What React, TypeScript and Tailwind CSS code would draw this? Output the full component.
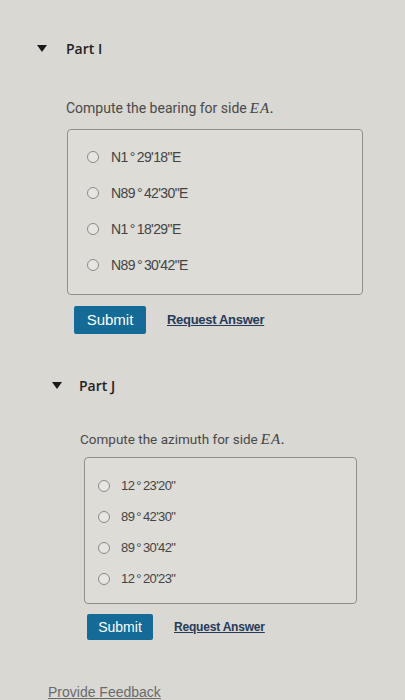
import React from "react";

const sans = { fontFamily: '"Liberation Sans", Arial, sans-serif' };

function Tri() {
  return (
    <svg width="10" height="7" viewBox="0 0 10 7">
      <path d="M0 0 L10 0 L5 7 Z" fill="#1a1a1a" />
    </svg>
  );
}

function Radio() {
  return <span className="inline-block w-[12px] h-[12px] rounded-full border-[1.5px] border-[#8a8a87] bg-[#e6e5e1] shrink-0" />;
}

function EA() {
  return (
    <span className="font-['Liberation_Serif',serif] italic text-[15px] text-[#444] ml-[3px] tracking-[1px]">
      EA.
    </span>
  );
}

function Angle({ text }: { text: string }) {
  const [a, b] = text.split("°");
  return (
    <>
      {a}
      <span className="mx-[2px]">°</span>
      {b}
    </>
  );
}

export default function App() {
  const opts1 = ["N1°29'18\"E", "N89°42'30\"E", "N1°18'29\"E", "N89°30'42\"E"];
  const opts2 = ["12°23'20\"", "89°42'30\"", "89°30'42\"", "12°20'23\""];
  return (
    <div className="w-[405px] h-[700px] overflow-hidden bg-[#d9d8d3] font-['Roboto',sans-serif]">
      {/* Part I */}
      <div className="flex flex-col pl-[37px]">
        <div className="flex items-center h-[20px] mt-[38px]">
          <Tri />
          <span className="ml-[19px] text-[14px] font-semibold text-[#222]" style={{ fontFamily: '"Open Sans", sans-serif' }}>Part I</span>
        </div>
        <div className="ml-[29px] mt-[40px] h-[20px] leading-[20px] text-[14px] text-[#4a4a4a]">
          Compute the bearing for side<EA />
        </div>
        <div className="ml-[30px] mt-[11px] w-[296px] h-[166px] border border-[#8f8e8a] rounded-[4px] bg-[#dddcd7] pt-[9px] pl-[19px]">
          {opts1.map((o) => (
            <div key={o} className="flex items-center h-[36px]">
              <Radio />
              <span className="ml-[12px] text-[14px] text-[#444] tracking-[-0.6px]" style={sans}><Angle text={o} /></span>
            </div>
          ))}
        </div>
        <div className="flex items-center ml-[37px] mt-[11px]">
          <div className="w-[72px] h-[28px] bg-[#146b97] rounded-[2px] flex items-center justify-center text-white text-[15px]" style={sans}>
            Submit
          </div>
          <span className="ml-[21px] text-[13px] font-bold underline text-[#243b59] tracking-[-0.3px]" style={sans}>Request Answer</span>
        </div>
      </div>

      {/* Part J */}
      <div className="flex flex-col pl-[52px]">
        <div className="flex items-center h-[20px] mt-[41px]">
          <Tri />
          <span className="ml-[17px] text-[14px] font-semibold text-[#222]" style={{ fontFamily: '"Open Sans", sans-serif' }}>Part J</span>
        </div>
        <div className="ml-[28px] mt-[34px] h-[20px] leading-[20px] text-[13.5px] text-[#4a4a4a]">
          Compute the azimuth for side<EA />
        </div>
        <div className="ml-[32px] mt-[8px] w-[273px] h-[147px] border border-[#8f8e8a] rounded-[4px] bg-[#dddcd7] pt-[12px] pl-[13px]">
          {opts2.map((o) => (
            <div key={o} className="flex items-center h-[31px]">
              <Radio />
              <span className="ml-[11px] text-[13px] text-[#444] tracking-[-0.6px]" style={sans}><Angle text={o} /></span>
            </div>
          ))}
        </div>
        <div className="flex items-center ml-[35px] mt-[10px]">
          <div className="w-[66px] h-[26px] bg-[#146b97] rounded-[2px] flex items-center justify-center text-white text-[14px]" style={sans}>
            Submit
          </div>
          <span className="ml-[21px] text-[12px] font-bold underline text-[#243b59] tracking-[-0.2px]" style={sans}>Request Answer</span>
        </div>
      </div>

      <div className="pl-[48px] mt-[42px] text-[14px] text-[#6a6a6a] underline" style={sans}>
        Provide Feedback
      </div>
    </div>
  );
}
